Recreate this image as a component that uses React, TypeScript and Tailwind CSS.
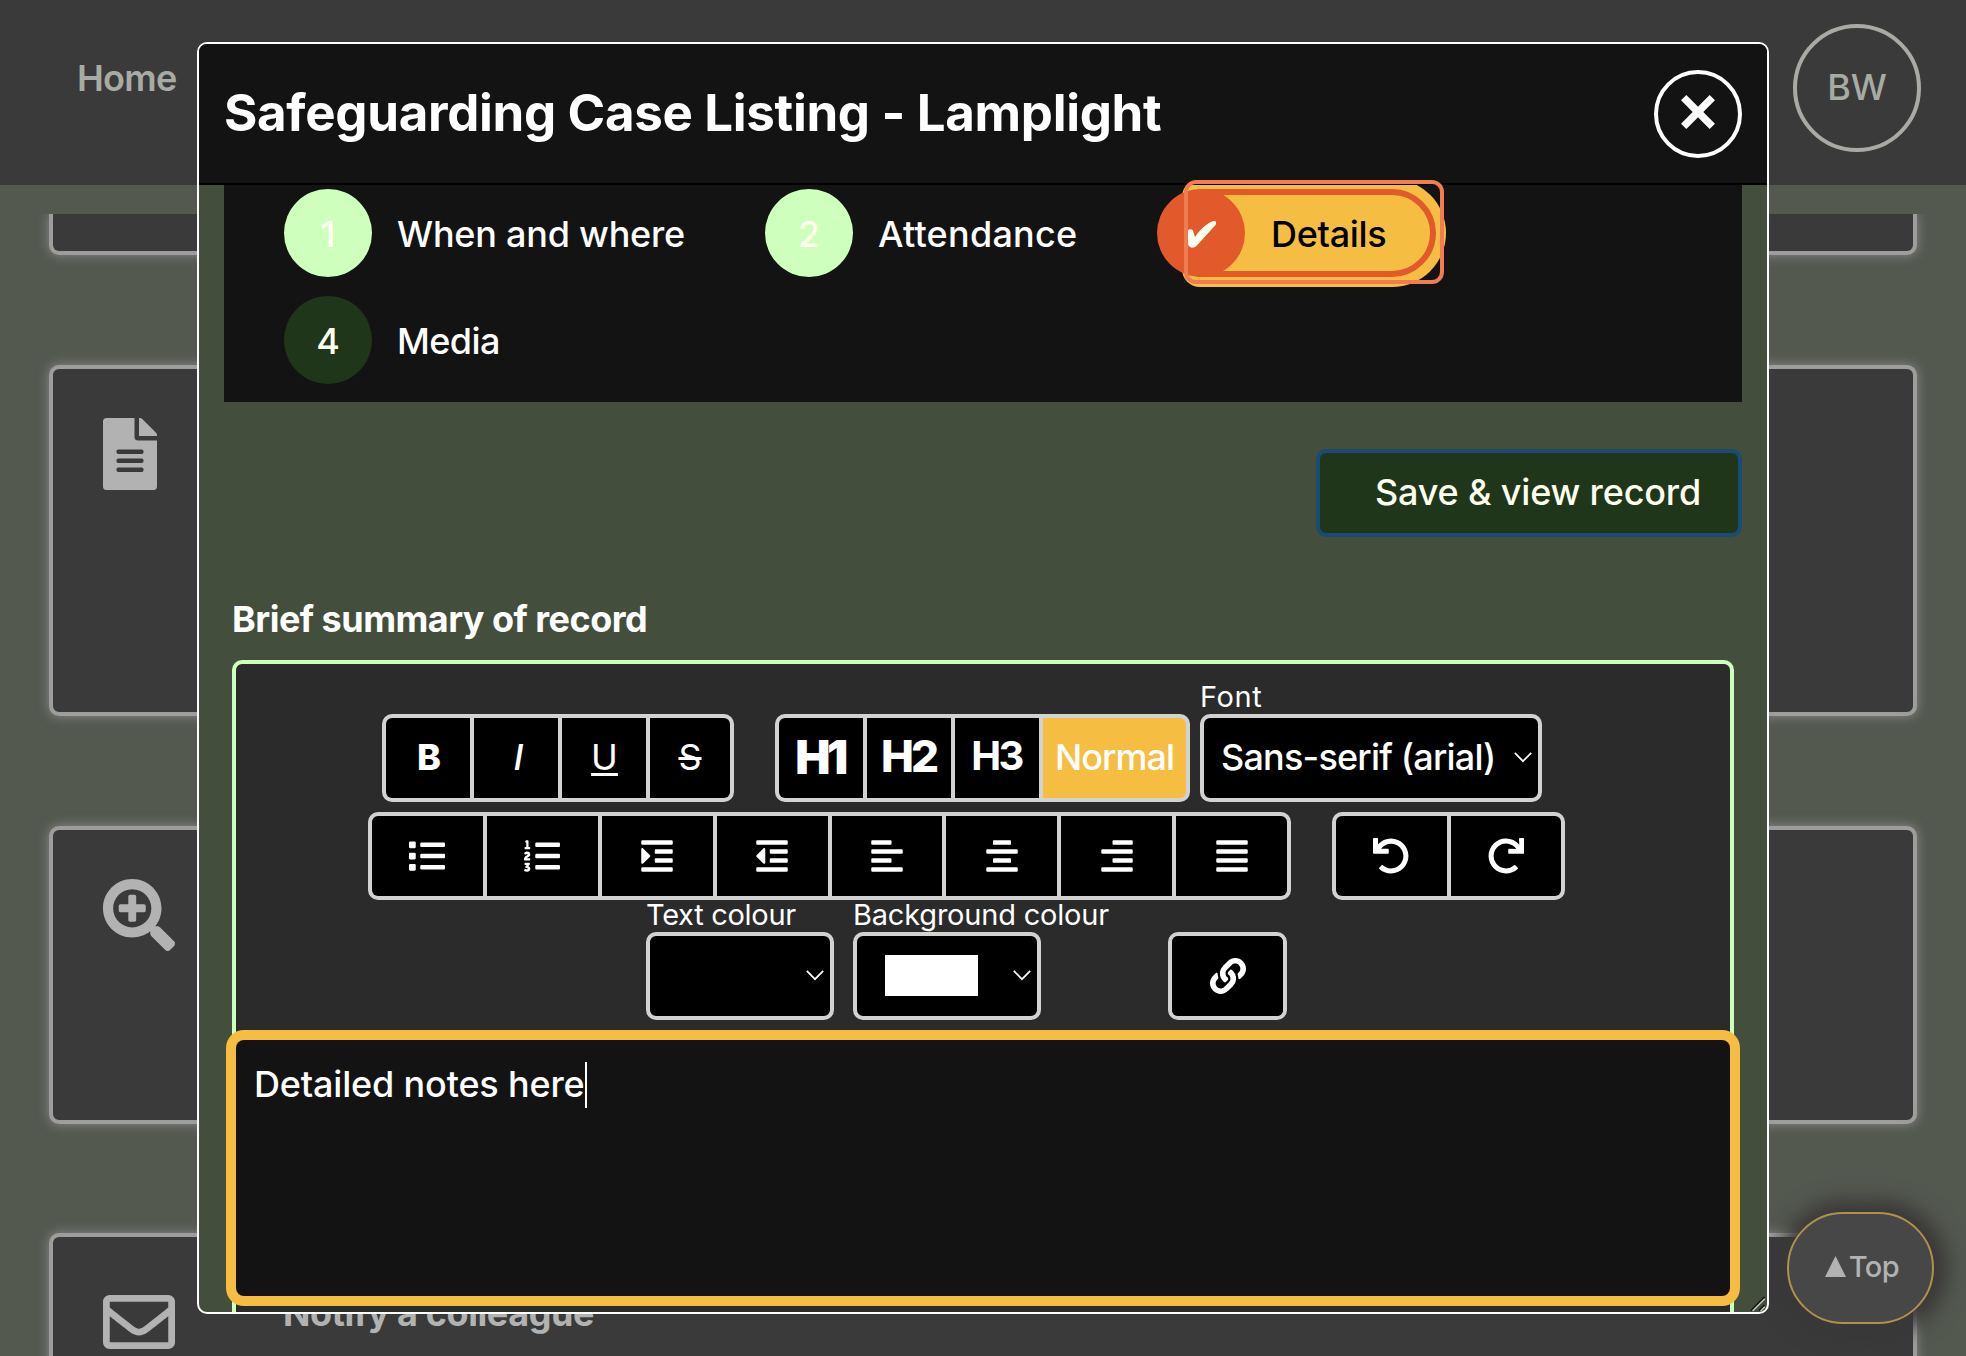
import React from 'react';
import type { ReactNode } from 'react';
import {
  FaAlignCenter,
  FaAlignJustify,
  FaAlignLeft,
  FaAlignRight,
  FaFileAlt,
  FaIndent,
  FaLink,
  FaList,
  FaListOl,
  FaOutdent,
  FaRedo,
  FaRegEnvelope,
  FaSearchPlus,
  FaUndo,
} from 'react-icons/fa';

/* ---------- page behind the dialog ---------- */

function Card({ className, children }: { className: string; children?: ReactNode }) {
  return (
    <div
      className={`flex shrink-0 items-start rounded-[10px] border-4 border-[#9d9d9d] bg-[#3a3a3a] pl-[50px] text-[#b2b2b2] shadow-[0_0_12px_rgba(157,157,157,0.75)] ${className}`}
    >
      {children}
    </div>
  );
}

function Page() {
  return (
    <div className="flex h-[1356px] flex-col">
      <header className="flex h-[185px] shrink-0 items-start justify-between bg-[#3a3a3a] pl-[77px] pr-[45px] text-[#a8aaa4]">
        <a className="mt-[58px] text-[36px] font-semibold leading-[40px] tracking-[-0.73px]">Home</a>
        <div className="mt-[24px] flex size-[128px] items-center justify-center rounded-full border-4 border-[#a8aaa4] pb-[2px] text-[36px] font-medium">
          BW
        </div>
      </header>
      <main className="mt-[29px] flex min-h-0 flex-1 flex-col overflow-hidden px-[49px]">
        <Card className="h-[41px] rounded-t-none border-t-0" />
        <Card className="mt-[110px] h-[351px] pt-[49px]">
          <FaFileAlt className="h-[72px] w-[54px]" />
        </Card>
        <Card className="mt-[110px] h-[298px] pt-[49px]">
          <FaSearchPlus className="size-[72px]" />
        </Card>
        <Card className="mt-[109px] h-[298px] gap-[108px] pt-[49px]">
          <FaRegEnvelope className="size-[72px]" />
          <h2 className="mt-[7px] text-[36px] font-bold leading-[40px] tracking-[-0.41px]">
            Notify a colleague
          </h2>
        </Card>
      </main>
    </div>
  );
}

function TopButton() {
  return (
    <button className="absolute left-[1787px] top-[1212px] flex h-[112px] w-[147px] items-center justify-center gap-[3px] rounded-[56px] border-2 border-[#ae914b] bg-[#474747] pb-[3px] pl-[3px] text-[29px] font-medium tracking-[-0.5px] text-[#b2b2b2] shadow-[2px_0_20px_12px_#3a3838]">
      <svg viewBox="0 0 21 21" className="size-[21px]" fill="currentColor">
        <path d="M10.5 0 21 21H0z" />
      </svg>
      Top
    </button>
  );
}

/* ---------- dialog ---------- */

function StepCircle({ tone, children }: { tone: string; children: ReactNode }) {
  return (
    <span
      className={`relative flex size-[88px] shrink-0 items-center justify-center rounded-full pt-px text-[36px] font-medium text-[#fffff0] ${tone}`}
    >
      {children}
    </span>
  );
}

function Steps() {
  return (
    <ol className="ml-[25px] mr-[25px] flex h-[217px] shrink-0 flex-wrap content-start gap-y-[19px] bg-[#131313] pl-[60px] pt-1 text-[36px] font-medium">
      <li className="flex w-[481px] items-center gap-[25px]">
        <StepCircle tone="bg-[#cfffbc]">1</StepCircle>
        <span className="pt-[2px] tracking-[-0.23px]">When and where</span>
      </li>
      <li className="flex w-[392px] items-center gap-[25px]">
        <StepCircle tone="bg-[#cfffbc]">2</StepCircle>
        <span className="pt-[2px] tracking-[0.24px]">Attendance</span>
      </li>
      <li className="relative flex w-[279px] items-center gap-[26px]">
        <span className="absolute inset-y-0 left-[35px] right-0 rounded-l-[8px] rounded-r-[44px] border-[6px] border-[#e2592c] bg-[#f5be43] shadow-[0_0_0_10px_#f5be43]" />
        <StepCircle tone="bg-[#e2592c]">
          <svg viewBox="0 0 32 32" className="mt-[3px] size-8" fill="currentColor">
            <path d="M2 12C4.5 9.5 7.5 10 8.3 12.7L10 18C15 11 21.7 3.5 29 2C31 1.7 31.7 4 30.3 6.3L12.3 26C9.7 29.3 5 30 3.3 26Z" />
          </svg>
        </StepCircle>
        <span className="relative pt-[2px] tracking-[-0.3px] text-black">Details</span>
      </li>
      <li className="flex w-[481px] items-center gap-[25px]">
        <StepCircle tone="bg-[#20361b]">4</StepCircle>
        <span className="pt-[2px] tracking-[-0.6px]">Media</span>
      </li>
    </ol>
  );
}

function Group({ className, children }: { className: string; children: ReactNode }) {
  return (
    <div
      className={`flex h-[88px] shrink-0 gap-1 overflow-hidden rounded-[10px] border-4 border-[#d2d2d2] bg-[#d2d2d2] ${className}`}
    >
      {children}
    </div>
  );
}

function Cell({ className = 'flex-1', children }: { className?: string; children: ReactNode }) {
  return (
    <button className={`flex h-full items-center justify-center bg-black text-[36px] ${className}`}>
      {children}
    </button>
  );
}

function Chevron() {
  return (
    <svg viewBox="0 0 18 11" className="h-[11px] w-[18px]" fill="none" stroke="currentColor" strokeWidth="1.7">
      <path d="M0.8 0.9 9 9.2 17.2 0.9" />
    </svg>
  );
}

function Picker({ label, tracking, className, children }: { label: string; tracking: string; className: string; children?: ReactNode }) {
  return (
    <div className={`flex shrink-0 flex-col ${className}`}>
      <label className={`h-8 whitespace-nowrap text-[29px] leading-[29px] ${tracking}`}>{label}</label>
      <div className="flex h-[88px] items-center justify-between rounded-[10px] border-4 border-[#d2d2d2] bg-black pb-px pl-[17px] pr-[6px]">
        {children}
        <Chevron />
      </div>
    </div>
  );
}

function Toolbar() {
  return (
    <div className="flex h-[376px] shrink-0 flex-col pt-[18px]">
      <div className="flex items-end pl-[146px]">
        <Group className="w-[352px]">
          <Cell className="w-[84px] pb-[2px] pl-[2px] font-extrabold">B</Cell>
          <Cell className="w-[84px] pb-[2px] pl-[5px] font-medium italic">I</Cell>
          <Cell className="w-[84px] pb-[2px] pl-px">
            <span className="underline decoration-[3px] underline-offset-[3px]">U</span>
          </Cell>
          <Cell className="w-[80px] pb-[2px]">
            <span className="line-through decoration-[3px]">S</span>
          </Cell>
        </Group>
        <Group className="ml-[41px] w-[415px]">
          <Cell className="w-[84px] pb-[2px]">
            <span className="mr-[2px] text-[47px] font-black tracking-[-3.5px]">H1</span>
          </Cell>
          <Cell className="w-[84px] pb-[5px]">
            <span className="mr-px text-[44px] font-extrabold tracking-[-3px]">H2</span>
          </Cell>
          <Cell className="w-[84px] pb-[5px]">
            <span className="mr-px text-[40px] font-bold tracking-[-2.5px]">H3</span>
          </Cell>
          <button className="flex h-full flex-1 items-center justify-center bg-[#f5be43] pb-[2px] text-[36px] font-medium tracking-[-0.95px]">
            Normal
          </button>
        </Group>
        <Picker label="Font" tracking="tracking-[0.6px]" className="ml-[10px] w-[342px]">
          <span className="whitespace-nowrap pb-px text-[36px] font-medium tracking-[-0.8px]">
            Sans-serif (arial)
          </span>
        </Picker>
      </div>
      <div className="mt-[10px] flex pl-[132px]">
        <Group className="w-[923px]">
          <Cell><FaList /></Cell>
          <Cell><FaListOl /></Cell>
          <Cell><FaIndent /></Cell>
          <Cell><FaOutdent /></Cell>
          <Cell><FaAlignLeft /></Cell>
          <Cell><FaAlignCenter /></Cell>
          <Cell><FaAlignRight /></Cell>
          <Cell><FaAlignJustify /></Cell>
        </Group>
        <Group className="ml-[41px] w-[233px]">
          <Cell><FaUndo /></Cell>
          <Cell><FaRedo /></Cell>
        </Group>
      </div>
      <div className="flex items-end pl-[410px]">
        <Picker label="Text colour" tracking="tracking-[-0.3px]" className="w-[188px]">
          <span />
        </Picker>
        <Picker label="Background colour" tracking="tracking-[-0.2px]" className="ml-[19px] w-[188px]">
          <span className="ml-[11px] h-[41px] w-[93px] bg-white" />
        </Picker>
        <Group className="ml-[127px] w-[119px]">
          <Cell className="flex-1 pb-px"><FaLink /></Cell>
        </Group>
      </div>
    </div>
  );
}

function Dialog() {
  return (
    <section className="absolute left-[197px] top-[42px] flex h-[1272px] w-[1572px] flex-col rounded-[10px] border-2 border-white bg-[#434e3d] text-white">
      <header className="flex h-[141px] shrink-0 items-center justify-between rounded-t-[8px] border-b-2 border-black bg-[#131313] pl-[25px] pr-[25px]">
        <h1 className="text-[51px] font-bold tracking-[-0.32px]">
          Safeguarding Case Listing - Lamplight
        </h1>
        <button className="flex size-[88px] items-center justify-center rounded-full border-4 border-white pb-1">
          <svg viewBox="0 0 34 34" className="size-[34px]" fill="none" stroke="currentColor" strokeWidth="7.5">
            <path d="M2.7 2.7 31.3 31.3M31.3 2.7 2.7 31.3" />
          </svg>
        </button>
      </header>

      <div className="flex min-h-0 flex-1 flex-col overflow-hidden rounded-b-[8px]">
        <Steps />
        <div className="mt-[47px] flex shrink-0 justify-end pr-[25px]">
          <button className="flex h-[88px] w-[426px] items-center justify-end rounded-[10px] border-4 border-[#1b4b73] bg-[#20361b] pb-[2px] pr-[37px] text-[36px] font-medium tracking-[-0.17px] text-[#fffff0]">
            Save &amp; view record
          </button>
        </div>
        <label className="ml-[33px] mt-[62px] shrink-0 text-[36px] font-bold leading-[40px] tracking-[-0.53px]">
          Brief summary of record
        </label>
        <div className="ml-[33px] mr-[33px] mt-[21px] flex h-[700px] shrink-0 flex-col rounded-[10px] border-4 border-[#cfffbc] bg-[#2b2b2b]">
          <Toolbar />
          <div className="flex h-[256px] shrink-0 items-start rounded-[8px] bg-[#131313] pl-[18px] pt-[22px] shadow-[0_0_0_10px_#f5be43]">
            <p className="text-[36px] font-medium leading-[44px] tracking-[-0.17px]">Detailed notes here</p>
            <span className="h-[46px] w-[2px] bg-white" />
          </div>
        </div>
      </div>

      {/* focus ring around the current step, drawn above the header edge */}
      <span className="pointer-events-none absolute left-[985px] top-[136px] h-[104px] w-[260px] rounded-[12px] border-4 border-[#f07c4f]" />

      <svg viewBox="0 0 16 16" className="absolute bottom-0 right-[1px] size-4" fill="none" strokeWidth="1.4">
        <path d="M1 14.5 14.5 1M9 14.5 14.5 9" stroke="#111" />
        <path d="M2.6 15 14.8 2.8M10.6 15 14.8 10.8" stroke="#c4c8c2" />
      </svg>
    </section>
  );
}

export default function App() {
  return (
    <div className="relative h-[1356px] w-[1966px] overflow-hidden bg-[#545950] font-[Inter,sans-serif]">
      <Page />
      <TopButton />
      <Dialog />
    </div>
  );
}
